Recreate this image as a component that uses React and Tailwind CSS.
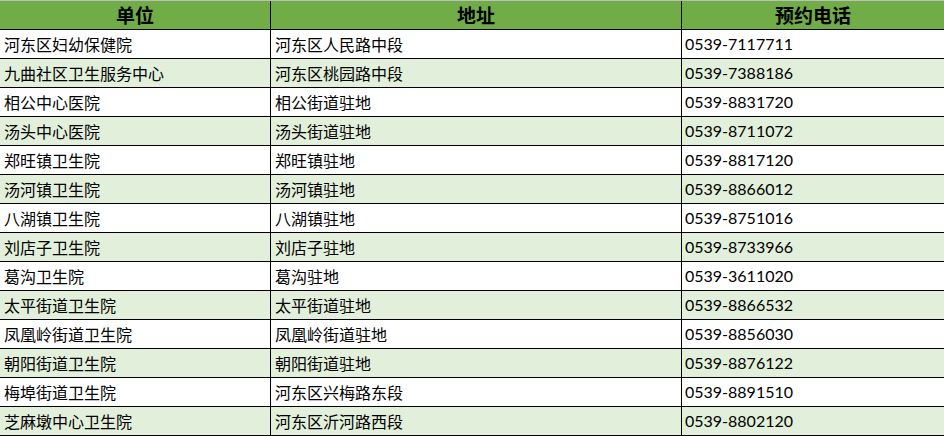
import React from 'react';

const rows = [
  ['河东区妇幼保健院', '河东区人民路中段', '0539-7117711'],
  ['九曲社区卫生服务中心', '河东区桃园路中段', '0539-7388186'],
  ['相公中心医院', '相公街道驻地', '0539-8831720'],
  ['汤头中心医院', '汤头街道驻地', '0539-8711072'],
  ['郑旺镇卫生院', '郑旺镇驻地', '0539-8817120'],
  ['汤河镇卫生院', '汤河镇驻地', '0539-8866012'],
  ['八湖镇卫生院', '八湖镇驻地', '0539-8751016'],
  ['刘店子卫生院', '刘店子驻地', '0539-8733966'],
  ['葛沟卫生院', '葛沟驻地', '0539-3611020'],
  ['太平街道卫生院', '太平街道驻地', '0539-8866532'],
  ['凤凰岭街道卫生院', '凤凰岭街道驻地', '0539-8856030'],
  ['朝阳街道卫生院', '朝阳街道驻地', '0539-8876122'],
  ['梅埠街道卫生院', '河东区兴梅路东段', '0539-8891510'],
  ['芝麻墩中心卫生院', '河东区沂河路西段', '0539-8802120'],
];

const cjk = { fontFamily: '"Microsoft YaHei", "Noto Sans CJK SC", sans-serif' };
const num = { fontFamily: 'Lato, "Noto Sans CJK SC", sans-serif' };

const App = () => {
  return (
    <div className="w-[944px] h-[436px] bg-white text-black overflow-hidden" style={cjk}>
      {/* header */}
      <div className="grid grid-cols-[270px_411px_1fr] h-[30px] border-t border-[#bfbfbf] border-b border-b-black bg-[#70ad47] font-bold text-[19px] leading-[28px]">
        <div className="text-center">单位</div>
        <div className="text-center border-l border-black">地址</div>
        <div className="text-center border-l border-black">预约电话</div>
      </div>

      {rows.map((r, i) => (
        <div
          key={i}
          className={`grid grid-cols-[270px_411px_1fr] h-[29px] border-b border-black text-[16px] leading-[28px] ${
            i % 2 === 1 ? 'bg-[#e2efda]' : 'bg-white'
          }`}
        >
          <div className="pl-[4px] whitespace-nowrap">{r[0]}</div>
          <div className="pl-[4px] border-l border-black whitespace-nowrap">{r[1]}</div>
          <div className="pl-[3px] border-l border-black whitespace-nowrap" style={num}>
            {r[2]}
          </div>
        </div>
      ))}
    </div>
  );
};

export default App;
